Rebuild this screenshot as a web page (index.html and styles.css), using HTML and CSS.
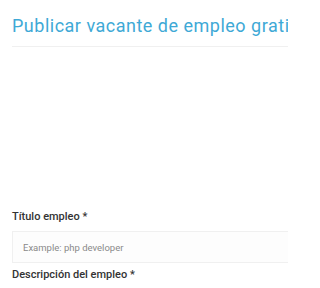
FILE: index.html
```html
<!DOCTYPE html>
<html lang="es">
<head>
<meta charset="utf-8">
<link rel="stylesheet" href="styles.css">
</head>
<body>
<div class="page">
  <h1 class="title">Publicar vacante de empleo gratis</h1>
  <div class="divider"></div>
  <div class="spacer"></div>
  <form class="form">
    <label class="label" for="t">Título empleo *</label>
    <input class="input" id="t" type="text" placeholder="Example: php developer">
    <label class="label label-desc">Descripción del empleo *</label>
  </form>
</div>
</body>
</html>
```
FILE: styles.css
```css
html, body {
  margin: 0;
  padding: 0;
  background: #ffffff;
  overflow: hidden;
}
.page {
  width: 288px;
  height: 288px;
  box-sizing: border-box;
  padding-left: 12px;
  font-family: Roboto, "Noto Sans", sans-serif;
  overflow: hidden;
}
.title {
  margin: 15px 0 0 0;
  font-size: 18px;
  line-height: 22px;
  font-weight: 400;
  color: #3ea9d6;
  letter-spacing: 0.5px;
  white-space: nowrap;
}
.divider {
  margin-top: 9px;
  height: 1px;
  background: #f0f0f0;
}
.spacer {
  height: 163px;
}
.form {
  display: flex;
  flex-direction: column;
}
.label {
  font-size: 11px;
  line-height: 13px;
  font-weight: 500;
  color: #333333;
}
.input {
  margin-top: 8px;
  height: 32px;
  box-sizing: border-box;
  border: 1px solid #f0f0f0;
  border-right: none;
  background: #fdfdfd;
  padding: 0 10px;
  font-family: Roboto, sans-serif;
  font-size: 9.5px;
  color: #333;
  outline: none;
}
.input::placeholder {
  color: #8a8a8a;
}
.label-desc {
  margin-top: 5px;
}
```
